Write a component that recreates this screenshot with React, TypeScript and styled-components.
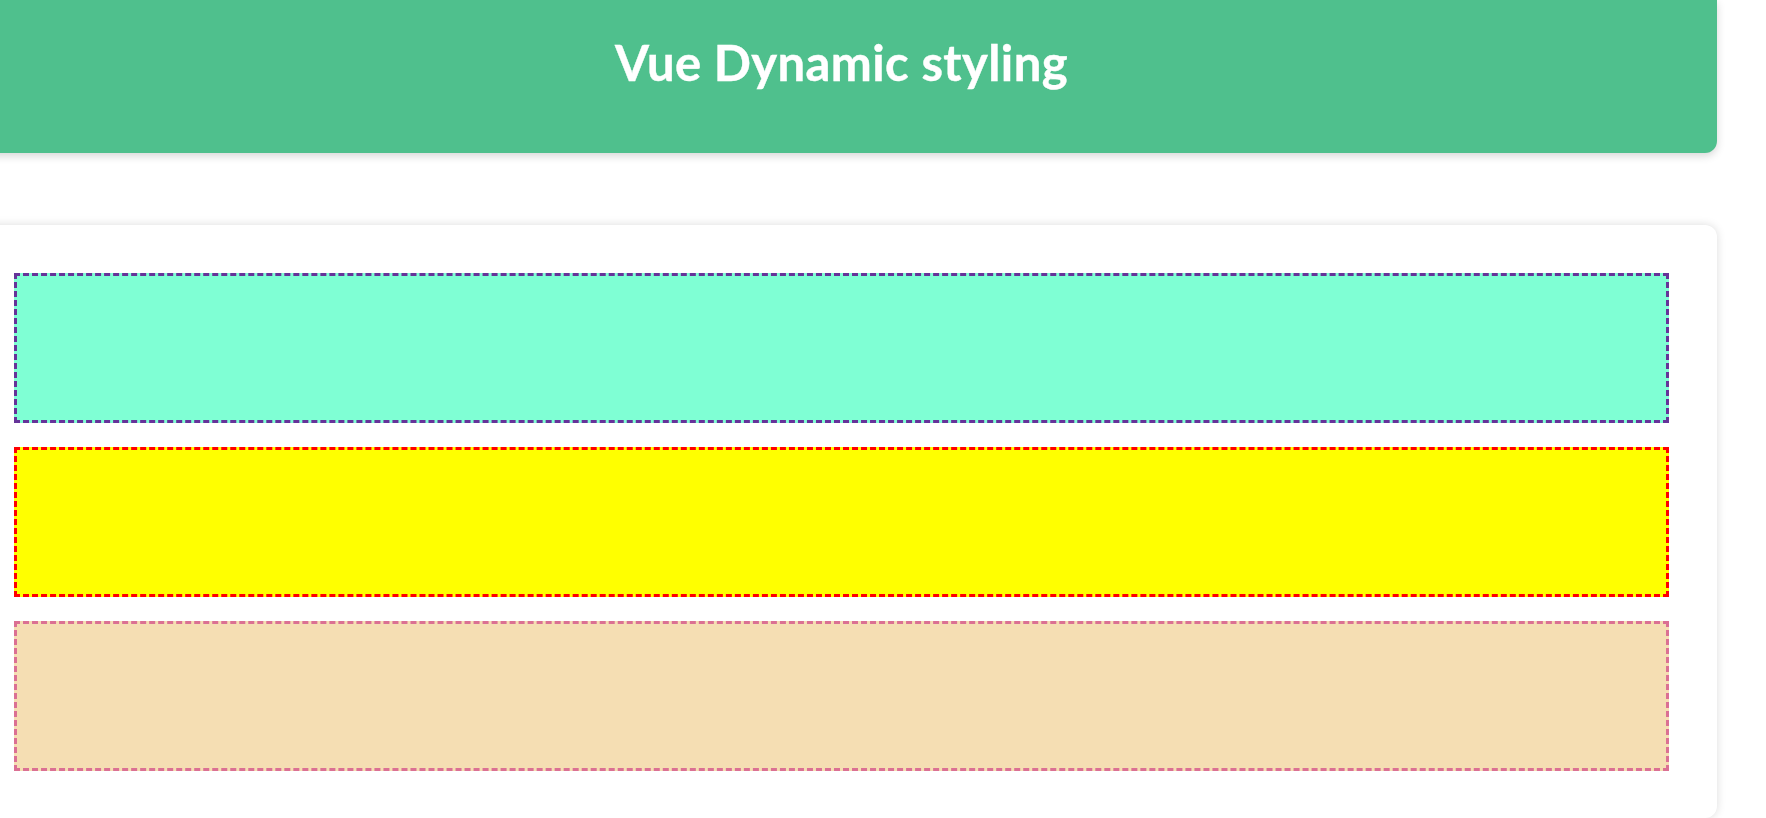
import React from "react";
import styled, { createGlobalStyle } from "styled-components";

const GlobalStyle = createGlobalStyle`
  html, body {
    margin: 0;
    padding: 0;
    background: #ffffff;
    overflow: hidden;
  }
  body {
    font-family: Lato, "Open Sans", sans-serif;
  }
`;

const Page = styled.div`
  width: 1751px;
  margin-left: -34px;
  display: flex;
  flex-direction: column;
  gap: 72px;
`;

const Header = styled.header`
  height: 153px;
  box-sizing: border-box;
  padding-top: 33px;
  background: #4fc08d;
  border-radius: 0 0 12px 12px;
  box-shadow: 0 3px 8px rgba(0, 0, 0, 0.16);
  display: flex;
  justify-content: center;
  align-items: flex-start;
`;

const Title = styled.h1`
  margin: 0;
  color: #ffffff;
  font-family: Lato, "Open Sans", sans-serif;
  font-weight: 700;
  font-size: 49px;
  line-height: 58px;
  letter-spacing: 0.4px;
  -webkit-text-stroke: 0.4px #ffffff;
`;

const Card = styled.section`
  background: #ffffff;
  border-radius: 12px;
  box-shadow: 0 0 10px rgba(0, 0, 0, 0.14);
  padding: 48px 48px 47px;
  display: flex;
  flex-direction: column;
  gap: 24px;
`;

const Box = styled.div<{ $bg: string; $border: string }>`
  box-sizing: border-box;
  height: 150px;
  background: ${(p) => p.$bg};
  border: 3px dashed ${(p) => p.$border};
`;

const boxes = [
  { bg: "aquamarine", border: "rebeccapurple" },
  { bg: "yellow", border: "red" },
  { bg: "wheat", border: "palevioletred" },
];

export default function App() {
  return (
    <>
      <GlobalStyle />
      <Page>
        <Header>
          <Title>Vue Dynamic styling</Title>
        </Header>
        <Card>
          {boxes.map((b, i) => (
            <Box key={i} $bg={b.bg} $border={b.border} />
          ))}
        </Card>
      </Page>
    </>
  );
}
